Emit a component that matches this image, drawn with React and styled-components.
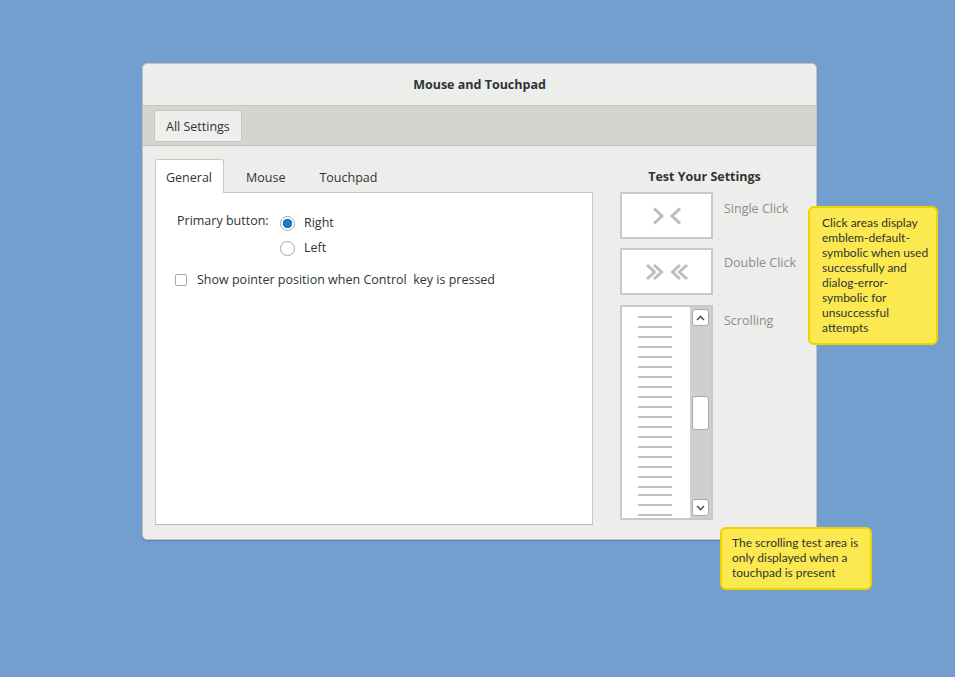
import React from 'react';
import styled, { createGlobalStyle } from 'styled-components';

const GlobalStyle = createGlobalStyle`
  html, body {
    margin: 0;
    padding: 0;
    background: #729fcf;
  }
  body {
    font-family: 'Open Sans', 'Noto Sans', sans-serif;
    font-size: 12.5px;
    color: #2e3436;
  }
`;

const Desktop = styled.div`
  position: relative;
  min-height: 677px;
  padding: 63px 0 0 142px;
  box-sizing: border-box;
`;

const Window = styled.div`
  width: 675px;
  height: 477px;
  box-sizing: border-box;
  display: flex;
  flex-direction: column;
  background: #ededeb;
  border: 1px solid #c2c2be;
  border-radius: 5px;
  box-shadow: 0 1px 1px rgba(0, 0, 0, 0.18);
  overflow: hidden;
`;

const TitleBar = styled.header`
  height: 41px;
  flex: none;
  display: flex;
  align-items: center;
  justify-content: center;
  border-bottom: 1px solid #c8c8c3;
  font-weight: 700;
`;

const Toolbar = styled.div`
  height: 40px;
  flex: none;
  box-sizing: border-box;
  display: flex;
  align-items: center;
  padding: 1px 11px 0;
  background: #d3d6cf;
  border-bottom: 1px solid #c2c4bd;
`;

const Button = styled.button`
  height: 32px;
  padding: 0 11px;
  font: inherit;
  color: #2e3436;
  background: #eeeeec;
  border: 1px solid #c6c7c2;
  border-radius: 3px;
`;

const Body = styled.div`
  flex: 1;
  display: flex;
`;

const LeftPane = styled.div`
  width: 450px;
  box-sizing: border-box;
  padding: 13px 0 14px 12px;
  display: flex;
  flex-direction: column;
`;

const TabRow = styled.div`
  display: flex;
  gap: 11px;
  height: 33px;
`;

const Tab = styled.div`
  display: flex;
  align-items: center;
  padding: 1px 11px 0 10px;
  box-sizing: border-box;
  border: 1px solid ${p => (p.$active ? '#c8c8c3' : 'transparent')};
  border-bottom: none;
  border-radius: 3px 3px 0 0;
  background: ${p => (p.$active ? '#ffffff' : 'transparent')};
  position: relative;
  z-index: 1;
  margin-bottom: -1px;
`;

const Page = styled.div`
  flex: 1;
  background: #ffffff;
  border: 1px solid #c8c8c3;
  border-bottom-color: #b9b9b5;
  padding: 18px 21px;
`;

const OptionGrid = styled.div`
  display: grid;
  grid-template-columns: 103px auto;
  align-items: center;
`;

const FieldLabel = styled.div`
  line-height: 20px;
  align-self: start;
`;

const RadioList = styled.div`
  display: flex;
  flex-direction: column;
  gap: 5px;
`;

const Choice = styled.label`
  display: flex;
  align-items: center;
  gap: 9px;
  line-height: 20px;
  margin-top: ${p => (p.$first ? '2px' : '0')};
`;

const Radio = styled.span`
  width: 15px;
  height: 15px;
  box-sizing: border-box;
  border-radius: 50%;
  border: 1px solid #a7a7a3;
  background: #ffffff;
  display: flex;
  align-items: center;
  justify-content: center;
  &::after {
    content: '';
    width: 9px;
    height: 9px;
    border-radius: 50%;
    background: ${p => (p.$checked ? '#1c7ecb' : 'transparent')};
    box-shadow: ${p => (p.$checked ? 'inset 0 0 0 1px #1666a8' : 'none')};
  }
`;

const CheckRow = styled.label`
  display: flex;
  align-items: center;
  gap: 10px;
  margin: 12px 0 0 -2px;
  line-height: 20px;
`;

const Checkbox = styled.span`
  width: 12px;
  height: 12px;
  box-sizing: border-box;
  border: 1px solid #a9a9a5;
  border-radius: 2px;
  background: #ffffff;
`;

const RightPane = styled.div`
  flex: 1;
  padding: 22px 0 0 27px;
  display: flex;
  flex-direction: column;
`;

const PaneTitle = styled.div`
  font-weight: 700;
  line-height: 18px;
  margin: 0 0 6px -27px;
  text-align: center;
`;

const TestGrid = styled.div`
  display: grid;
  grid-template-columns: 93px auto;
  column-gap: 11px;
  row-gap: 9px;
  align-items: start;
`;

const ClickArea = styled.div`
  height: 47px;
  box-sizing: border-box;
  border: 2px solid #c9c9c4;
  background: #ffffff;
  display: flex;
  align-items: center;
  justify-content: center;
  margin-bottom: ${p => p.$gap || 0}px;
`;

const TestLabel = styled.div`
  color: #8c8e89;
  font-size: 12.5px;
  line-height: 18px;
  padding-top: ${p => p.$top}px;
`;

const ScrollArea = styled.div`
  height: 215px;
  box-sizing: border-box;
  border: 2px solid #c9c9c4;
  background: #ffffff;
  display: flex;
  overflow: hidden;
`;

const Lines = styled.div`
  flex: 1;
  padding: 9px 0 0 16px;
  overflow: hidden;
`;

const Line = styled.div`
  width: 34px;
  height: 2px;
  background: #c1c1bf;
  margin-top: ${p => p.$gap}px;
`;

const ScrollBar = styled.div`
  width: 21px;
  background: #cfcfcd;
  display: flex;
  flex-direction: column;
  align-items: center;
  padding: 2px 0;
  box-sizing: border-box;
`;

const ScrollButton = styled.div`
  width: 17px;
  height: 17px;
  box-sizing: border-box;
  background: #ffffff;
  border: 1px solid #a9a9a6;
  border-radius: 3px;
  display: flex;
  align-items: center;
  justify-content: center;
`;

const Thumb = styled.div`
  width: 17px;
  height: 34px;
  box-sizing: border-box;
  background: #ffffff;
  border: 1px solid #a9a9a6;
  border-radius: 3px;
  margin: auto 0;
`;

const Note = styled.div`
  position: absolute;
  left: ${p => p.$x}px;
  top: ${p => p.$y}px;
  width: ${p => p.$w}px;
  box-sizing: border-box;
  padding: ${p => p.$pad};
  background: #fce94f;
  border: 2px solid #edd400;
  border-radius: 6px;
  font-family: 'Lato', 'Noto Sans', sans-serif;
  font-size: 12px;
  line-height: 15px;
  color: #2e3436;
`;

const Chevrons = ({ double }) => (
  <svg width={double ? 44 : 30} height="18" viewBox={double ? '0 0 44 18' : '0 0 30 18'}>
    <g fill="none" stroke="#bdbdbb" strokeWidth="3">
      {double ? (
        <>
          <path d="M2 2 L9.5 9 L2 16" />
          <path d="M9 2 L16.5 9 L9 16" />
          <path d="M42 2 L34.5 9 L42 16" />
          <path d="M35 2 L27.5 9 L35 16" />
        </>
      ) : (
        <>
          <path d="M2 1.5 L10 9 L2 16.5" />
          <path d="M28 1.5 L20 9 L28 16.5" />
        </>
      )}
    </g>
  </svg>
);

const Arrow = ({ up }) => (
  <svg width="9" height="6" viewBox="0 0 9 6">
    <path
      d={up ? 'M1 5 L4.5 1.5 L8 5' : 'M1 1 L4.5 4.5 L8 1'}
      fill="none"
      stroke="#555753"
      strokeWidth="1.6"
    />
  </svg>
);

const lineGaps = [0, 8, 8, 8, 8, 8, 8, 8, 8, 8, 8, 8, 8, 8, 8, 8, 8, 8, 6, 8, 8];

function App() {
  return (
    <>
      <GlobalStyle />
      <Desktop>
        <Window>
          <TitleBar>Mouse and Touchpad</TitleBar>
          <Toolbar>
            <Button>All Settings</Button>
          </Toolbar>
          <Body>
            <LeftPane>
              <TabRow>
                <Tab $active>General</Tab>
                <Tab>Mouse</Tab>
                <Tab>Touchpad</Tab>
              </TabRow>
              <Page>
                <OptionGrid>
                  <FieldLabel>Primary button:</FieldLabel>
                  <RadioList>
                    <Choice $first>
                      <Radio $checked />
                      Right
                    </Choice>
                    <Choice>
                      <Radio />
                      Left
                    </Choice>
                  </RadioList>
                </OptionGrid>
                <CheckRow>
                  <Checkbox />
                  Show pointer position when Control&nbsp; key is pressed
                </CheckRow>
              </Page>
            </LeftPane>
            <RightPane>
              <PaneTitle>Test Your Settings</PaneTitle>
              <TestGrid>
                <ClickArea>
                  <Chevrons />
                </ClickArea>
                <TestLabel $top={8}>Single Click</TestLabel>
                <ClickArea $gap={1}>
                  <Chevrons double />
                </ClickArea>
                <TestLabel $top={6}>Double Click</TestLabel>
                <ScrollArea>
                  <Lines>
                    {lineGaps.map((g, i) => (
                      <Line key={i} $gap={g} />
                    ))}
                  </Lines>
                  <ScrollBar>
                    <ScrollButton>
                      <Arrow up />
                    </ScrollButton>
                    <Thumb />
                    <ScrollButton>
                      <Arrow />
                    </ScrollButton>
                  </ScrollBar>
                </ScrollArea>
                <TestLabel $top={7}>Scrolling</TestLabel>
              </TestGrid>
            </RightPane>
          </Body>
        </Window>
        <Note $x={808} $y={206} $w={130} $pad="7px 2px 8px 12px">
          Click areas display emblem-default-symbolic when used successfully and
          dialog-error-symbolic for unsuccessful attempts
        </Note>
        <Note $x={720} $y={527} $w={152} $pad="6px 6px 8px 10px">
          The scrolling test area is only displayed when a touchpad is present
        </Note>
      </Desktop>
    </>
  );
}

export default App;
